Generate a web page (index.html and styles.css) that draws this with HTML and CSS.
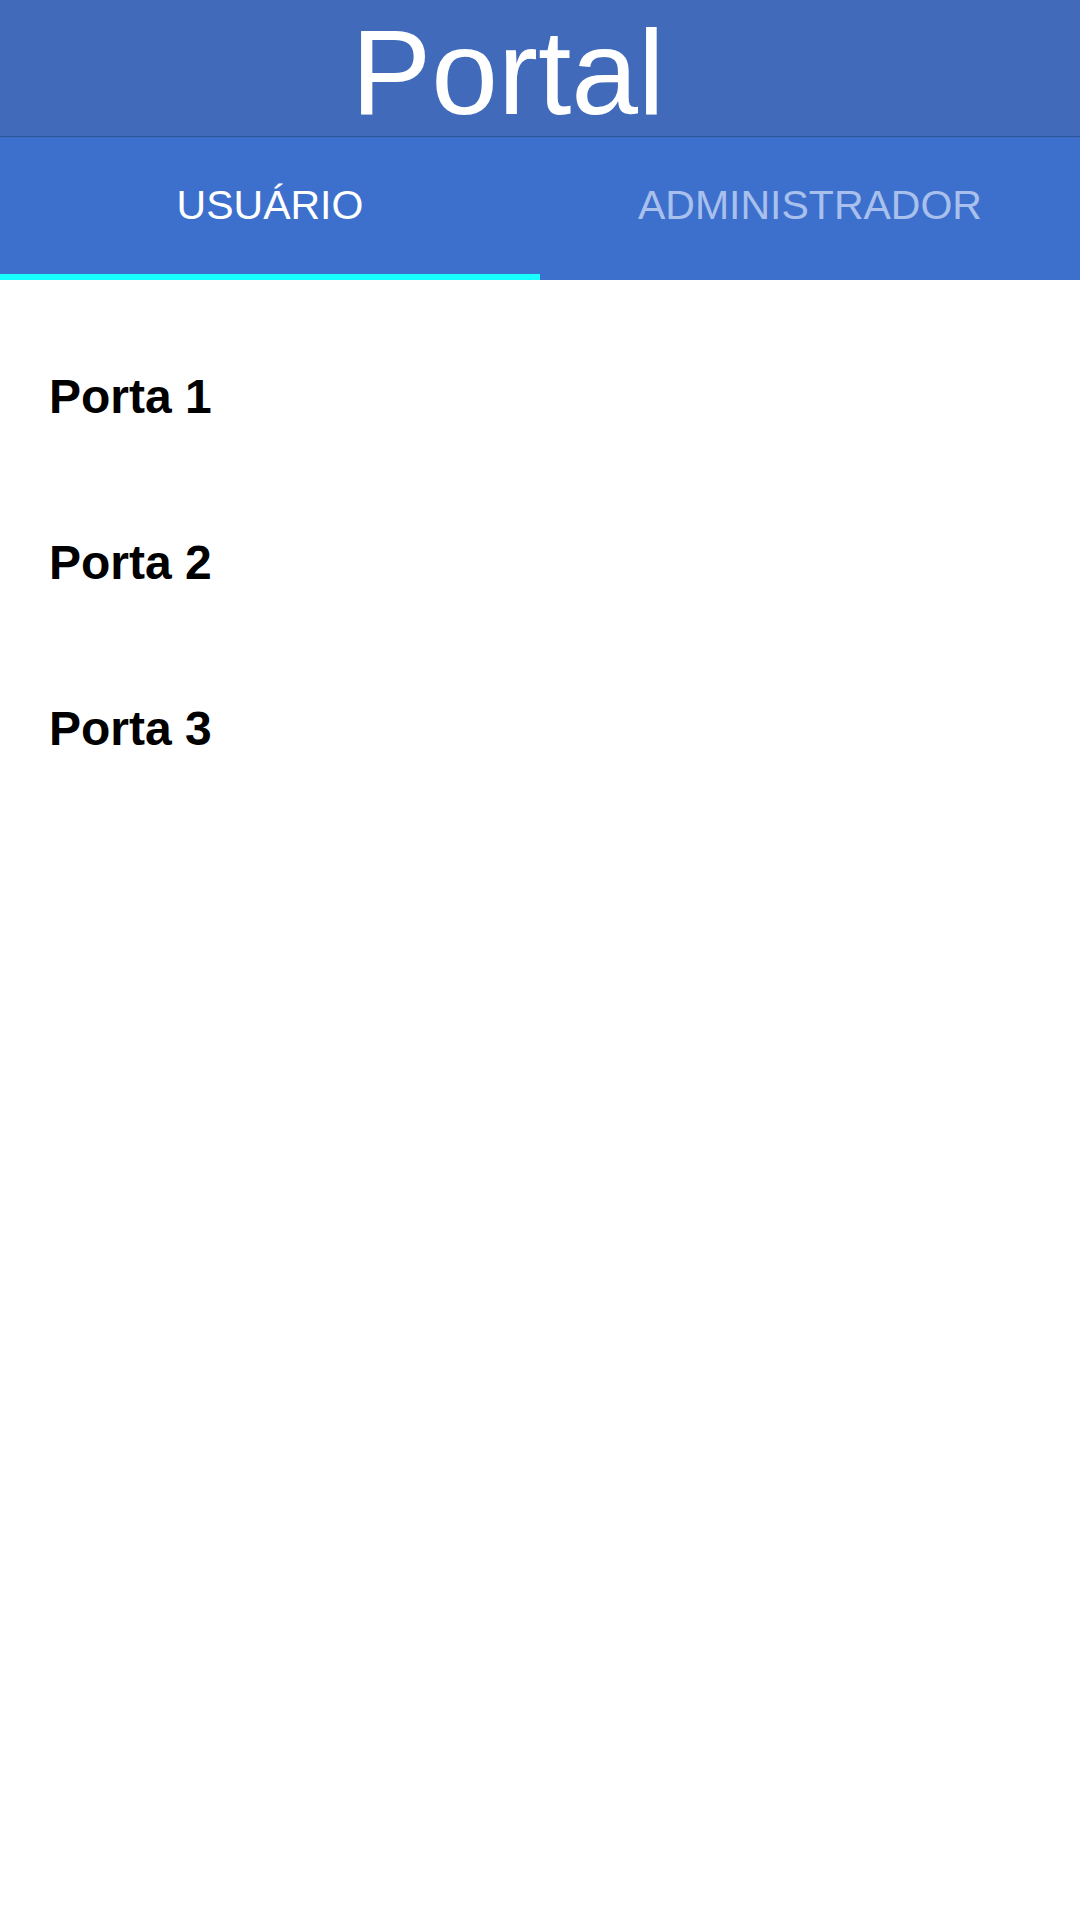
FILE: index.html
```html
<!DOCTYPE html>
<html lang="pt">
<head>
<meta charset="utf-8">
<title>Portal</title>
<link rel="stylesheet" href="styles.css">
</head>
<body>
<div class="app">
  <header class="header">
    <h1 class="title">Portal</h1>
  </header>
  <nav class="tabs">
    <div class="tab active"><span class="tab-label">USUÁRIO</span></div>
    <div class="tab"><span class="tab-label">ADMINISTRADOR</span></div>
  </nav>
  <ul class="list">
    <li class="item">Porta 1</li>
    <li class="item">Porta 2</li>
    <li class="item">Porta 3</li>
  </ul>
</div>
</body>
</html>
```
FILE: styles.css
```css
html, body {
  margin: 0;
  padding: 0;
  background: #ffffff;
}
body {
  font-family: "Liberation Sans", Arial, sans-serif;
  width: 1080px;
  height: 1920px;
  overflow: hidden;
}
.app {
  display: flex;
  flex-direction: column;
}
.header {
  background: #416bba;
  height: 136px;
  box-sizing: border-box;
  padding-top: 9px;
  padding-right: 64px;
  display: flex;
  justify-content: center;
  align-items: flex-start;
  box-shadow: 0 1px 1px rgba(0, 0, 0, 0.22);
  position: relative;
  z-index: 1;
}
.title {
  margin: 0;
  color: #ffffff;
  font-weight: 400;
  font-size: 120px;
  line-height: 127px;
}
.tabs {
  display: flex;
  background: #3d70cc;
  height: 144px;
}
.tab {
  flex: 1;
  display: flex;
  align-items: center;
  justify-content: center;
  box-sizing: border-box;
  border-bottom: 6px solid transparent;
  color: #a9c0ec;
}
.tab.active {
  color: #ffffff;
  border-bottom-color: #18ffff;
}
.tab-label {
  font-size: 41px;
}
.list {
  list-style: none;
  margin: 0;
  padding: 34px 0 0 0;
}
.item {
  height: 166px;
  line-height: 166px;
  padding-left: 49px;
  font-size: 48px;
  font-weight: 700;
  color: #000000;
}
```
